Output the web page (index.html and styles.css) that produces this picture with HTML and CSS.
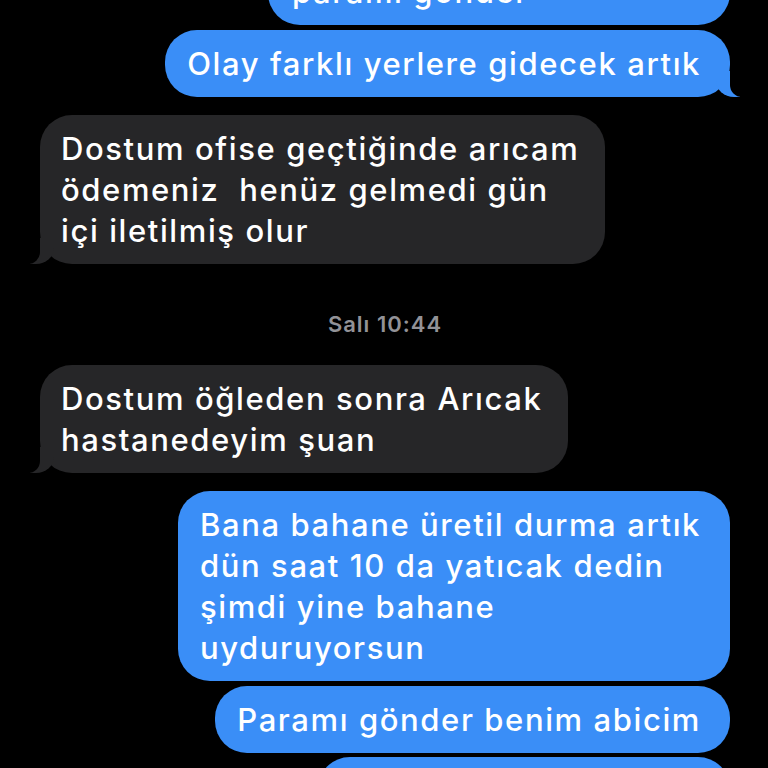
FILE: index.html
```html
<!DOCTYPE html>
<html lang="tr">
<head>
<meta charset="utf-8">
<title>Mesajlar</title>
<link rel="stylesheet" href="styles.css">
</head>
<body>
<main class="chat">
  <div class="bubble me w-top">paramı gönder</div>
  <div class="bubble me tail gap-s">Olay farklı yerlere gidecek artık</div>
  <div class="bubble them tail gap-l">Dostum ofise geçtiğinde arıcam<br>ödemeniz&nbsp; henüz gelmedi gün<br>içi iletilmiş olur</div>
  <div class="stamp">Salı 10:44</div>
  <div class="bubble them tail">Dostum öğleden sonra Arıcak<br>hastanedeyim şuan</div>
  <div class="bubble me gap-l">Bana bahane üretil durma artık<br>dün saat 10 da yatıcak dedin<br>şimdi yine bahane<br>uyduruyorsun</div>
  <div class="bubble me gap-s">Paramı gönder benim abicim</div>
  <div class="bubble me gap-s w-bottom">&nbsp;</div>
</main>
</body>
</html>
```
FILE: styles.css
```css
html, body {
  margin: 0;
  padding: 0;
  background: #000;
}
body {
  width: 768px;
  height: 768px;
  overflow: hidden;
  font-family: Inter, "Noto Sans", sans-serif;
}
.chat {
  display: flex;
  flex-direction: column;
  padding: 0 38px 0 40px;
  margin-top: -42px;
}
.bubble {
  position: relative;
  box-sizing: border-box;
  width: fit-content;
  padding: 13px 29px 13px 22px;
  border-radius: 32px;
  font-size: 31px;
  font-weight: 500;
  line-height: 41px;
  color: #fff;
  letter-spacing: 1.6px;
}
.me {
  align-self: flex-end;
  background: #3a8ef7;
}
.them {
  align-self: flex-start;
  background: #262628;
  padding: 13px 26px 13px 21px;
}
.gap-s { margin-top: 5px; }
.gap-l { margin-top: 18px; }
.w-top { width: 462px; padding-left: 24px; }
.w-bottom { width: 412px; margin-top: 4px; }

.tail::before,
.tail::after {
  content: "";
  position: absolute;
  bottom: 0;
  height: 26px;
}
.me.tail::before {
  right: -10px;
  width: 24px;
  background: #3a8ef7;
  border-bottom-left-radius: 18px 16px;
}
.me.tail::after {
  right: -30px;
  width: 30px;
  background: #000;
  border-bottom-left-radius: 12px;
}
.them.tail::before {
  left: -10px;
  width: 24px;
  background: #262628;
  border-bottom-right-radius: 18px 16px;
}
.them.tail::after {
  left: -30px;
  width: 30px;
  background: #000;
  border-bottom-right-radius: 12px;
}
.stamp {
  align-self: center;
  margin: 48px 0 29px;
  font-size: 22px;
  line-height: 24px;
  font-weight: 600;
  letter-spacing: 1px;
  color: #929297;
}
```
